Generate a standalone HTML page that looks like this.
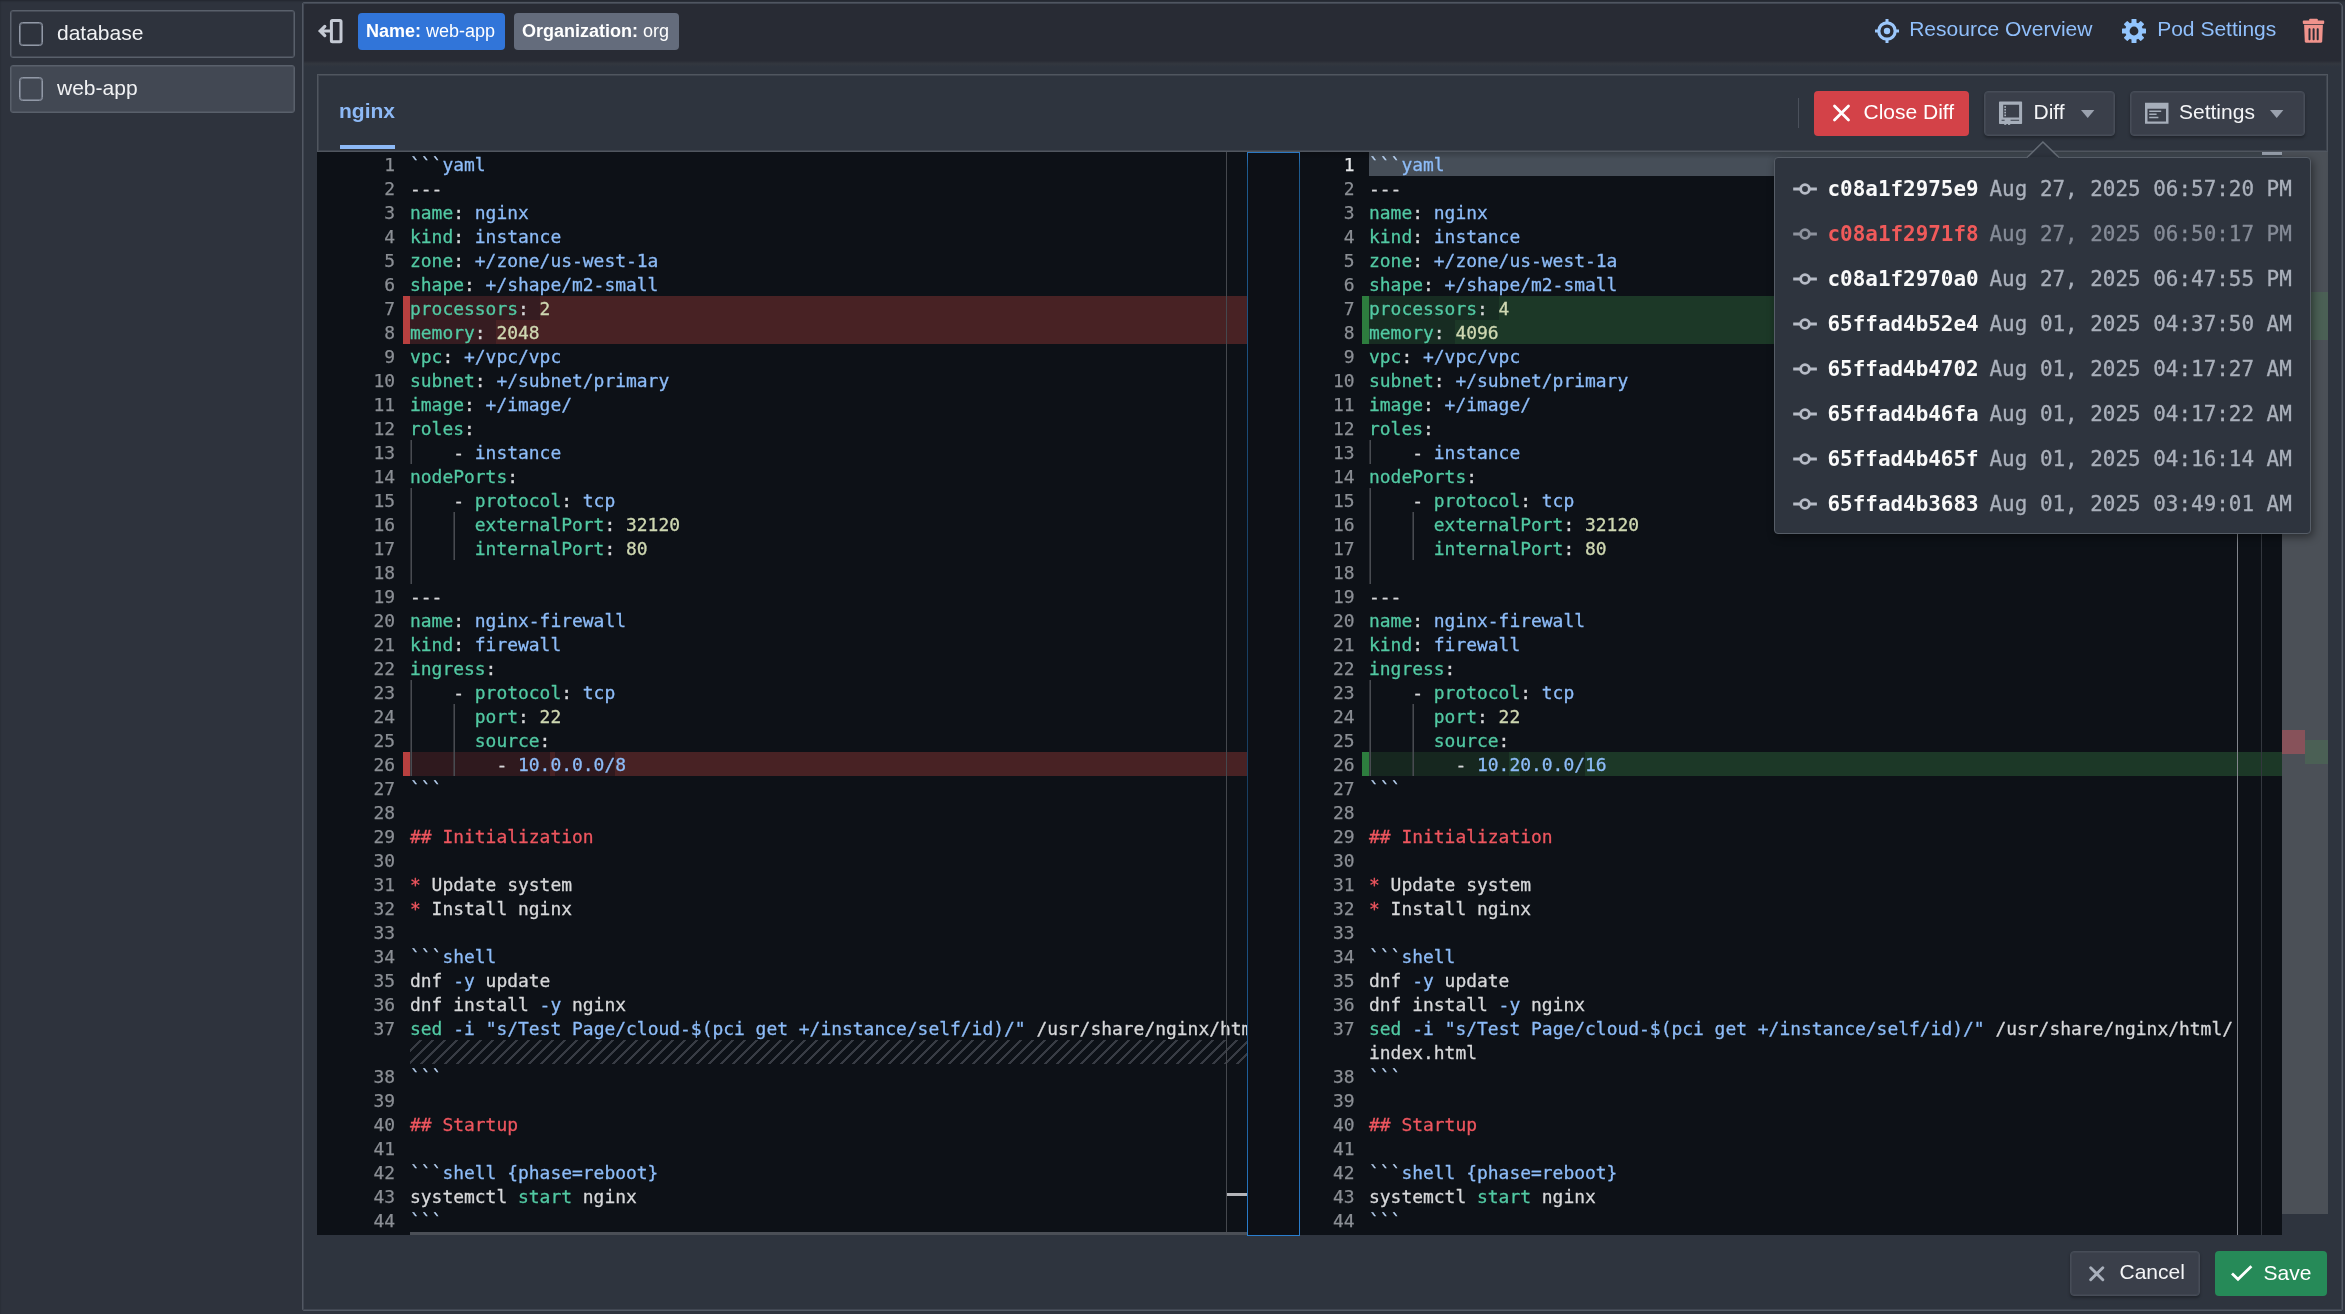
<!DOCTYPE html>
<html lang="en">
<head>
<meta charset="utf-8">
<title>Pod editor - web-app</title>
<style>
*{box-sizing:border-box}
html,body{margin:0;padding:0}
body{width:2345px;height:1314px;overflow:hidden;background:#2e333d;position:relative;
  font-family:"Liberation Sans",Arial,sans-serif;font-size:21px;color:#eef0f3}
.abs{position:absolute}
#wrap{position:absolute;left:0;top:0;width:2345px;height:1314px;will-change:transform}
/* window edge vignette */
#vig{left:0;top:0;width:2345px;height:1314px;box-shadow:inset 1px 2px 2px -1px rgba(10,12,18,.32);pointer-events:none}
/* sidebar */
.item{position:absolute;left:10px;width:285px;height:48px;border:1px solid #59606b;border-radius:3px;box-shadow:inset 0 0 0 1px rgba(89,96,107,.5)}
.item.sel{background:#424853}
.item .cb{position:absolute;left:8px;top:11px;width:24px;height:24px;border:1px solid #9299a7;box-shadow:inset 0 0 0 1px rgba(146,153,167,.55);border-radius:3.5px}
.item .lb{position:absolute;left:46px;top:1px;line-height:42px;height:42px;font-size:21px;color:#f1f2f4;white-space:nowrap}
/* main panel */
#main{left:302px;top:2px;width:2040.5px;height:1308.5px;border:1px solid #525863;box-shadow:inset 0 0 0 1px rgba(82,88,99,.5);border-radius:2px 5px 2px 2px;background:#2e343e}
#hdr{left:303.5px;top:4px;width:2037.5px;height:56.5px;background:#282b34;border-radius:2px 4px 0 0}
#hdr:after{content:"";position:absolute;left:0;top:56.5px;width:100%;height:6px;background:linear-gradient(to bottom,#292c35,#33373f 45%,#2e343e)}
.tag{position:absolute;top:9px;height:37px;border-radius:4px;font-size:18px;line-height:37px;color:#fff;white-space:nowrap;padding-left:8px}
.tag b{font-weight:bold}
.hlink{position:absolute;top:0;height:50px;line-height:49px;font-size:21px;color:#90bffb;white-space:nowrap}
/* tab panel */
#tabs{left:317px;top:74px;width:2010.5px;height:78px;border:1px solid #50565f;box-shadow:inset 0 0 0 1px rgba(80,86,95,.5);background:#2e343e}
#tabname{left:339px;top:91px;height:40px;line-height:40px;font-weight:bold;font-size:21px;color:#8db9f6;white-space:nowrap}
#tabline{left:340px;top:144.7px;width:55px;height:4.4px;background:#8db9f6}
.btn{position:absolute;top:91px;height:45px;border-radius:4px;font-size:21px;line-height:43px;white-space:nowrap;color:#f4f5f7}
.btn.sec{background:#3a3f4a;border:1px solid #474d58;box-shadow:inset 0 0 0 1px rgba(71,77,88,.5),0 2px 3px rgba(0,0,0,.3)}
.btn .bt{position:absolute;top:0}
.btn.sec .bt{line-height:40.5px}
/* editor */
#ed{left:317px;top:152px;width:1965px;height:1083px;background:#0d1117;overflow:hidden}
.pane{position:absolute;top:0;height:1083px;overflow:hidden}
.mono{font-family:"DejaVu Sans Mono","Liberation Mono",monospace;font-size:17.94px;line-height:24px}
.lns{position:absolute;top:1px;text-align:right;color:#8b8f95;-webkit-text-stroke:0.25px currentColor}
.ln{height:24px}
.ln.act{color:#e6e8ea}
.code{position:absolute;top:1px;color:#d7d8da;-webkit-text-stroke:0.3px currentColor}
.cl{height:24px;white-space:pre}
.k{color:#52c9a3}.s{color:#8dbcf8}.n{color:#cfd8b2}.h{color:#ee565f}.t{color:#b9d3f3}
.hatch{width:1000px;margin-top:-1px;margin-bottom:1px;background-image:linear-gradient(-45deg,#383c44 12.5%,transparent 12.5%,transparent 50%,#383c44 50%,#383c44 62.5%,transparent 62.5%,transparent 100%);background-size:12px 12px}
.ig{position:absolute;width:1px;background:#484b51;box-shadow:-1px 0 0 rgba(72,75,81,.55)}
.bgl{position:absolute;height:24px}
/* popup */
#pop{left:1774px;top:157px;width:536.5px;height:376.5px;background:#2e343e;border:1.5px solid #565d67;border-radius:4px;box-shadow:2px 3px 8px rgba(0,0,0,.45)}
.cm{position:absolute;left:0;width:100%;height:47px;line-height:47px;font-family:"DejaVu Sans Mono","Liberation Mono",monospace;font-size:20.93px;white-space:pre;color:#aab0bb}
.cm .ci{position:absolute;left:17.5px;top:16.700px;color:#b6bbc6}
.cm .hs{position:absolute;left:52.5px;font-weight:bold;color:#fafafa}
.cm .dt{position:absolute;left:214.5px;-webkit-text-stroke:0.3px currentColor}
.cm.cur .hs{color:#f05a5a}
.cm.cur .dt{color:#858b97}
.cm.cur .ci{color:#8d929d}
</style>
</head>
<body>
<div id="wrap">
<!-- sidebar -->
<div class="item" style="top:10px"><div class="cb"></div><div class="lb">database</div></div>
<div class="item sel" style="top:65px"><div class="cb"></div><div class="lb">web-app</div></div>

<!-- main panel -->
<div id="main" class="abs"></div>
<div id="hdr" class="abs">
  <svg class="abs" style="left:12px;top:13px" width="30" height="30" viewBox="0 0 30 30"><rect x="15.4" y="3.5" width="9.6" height="21.2" rx="1" fill="none" stroke="#c5cad4" stroke-width="3"/><path d="M14 14H4.2M8.8 9.4L4.2 14L8.8 18.6" fill="none" stroke="#c5cad4" stroke-width="3.2" stroke-linecap="round" stroke-linejoin="miter"/></svg>
  <div class="tag" style="left:54.5px;width:147px;background:#3175d9"><b>Name:</b> web-app</div>
  <div class="tag" style="left:210.5px;width:165px;background:#646c7c"><b>Organization:</b> org</div>

  <svg class="abs" style="left:1569.5px;top:13px" width="28" height="28" viewBox="0 0 28 28"><circle cx="14" cy="14" r="8.200" fill="none" stroke="#9cc7fb" stroke-width="3.200"/><circle cx="14" cy="14" r="3.2" fill="#9cc7fb"/><path d="M14 2v4M14 22v4M2 14h4M22 14h4" stroke="#9cc7fb" stroke-width="3"/></svg>
  <div class="hlink" style="left:1605.7px">Resource Overview</div>

  <svg class="abs" style="left:1816.5px;top:13px" width="28" height="28" viewBox="-14 -14 28 28"><g fill="#93c5fd"><path fill-rule="evenodd" d="M0-8.8A8.8 8.8 0 1 0 0 8.8A8.8 8.8 0 1 0 0-8.8ZM0-4.4A4.4 4.4 0 1 1 0 4.4A4.4 4.4 0 1 1 0-4.4Z"/><g id="teeth"><rect x="-2.5" y="-12" width="5" height="5" rx=".6"/><rect x="-2.5" y="7" width="5" height="5" rx=".6"/><rect x="-12" y="-2.5" width="5" height="5" rx=".6"/><rect x="7" y="-2.5" width="5" height="5" rx=".6"/></g><g transform="rotate(45)"><rect x="-2.5" y="-12" width="5" height="5" rx=".6"/><rect x="-2.5" y="7" width="5" height="5" rx=".6"/><rect x="-12" y="-2.5" width="5" height="5" rx=".6"/><rect x="7" y="-2.5" width="5" height="5" rx=".6"/></g></g></svg>
  <div class="hlink" style="left:1853.7px">Pod Settings</div>

  <svg class="abs" style="left:1997.5px;top:13px" width="26" height="28" viewBox="0 0 26 28"><g fill="#f0938c"><rect x="8.200" y="1.700" width="8.600" height="3" rx=".9"/><rect x="1.800" y="3.600" width="21.400" height="3.300" rx=".9"/><path fill-rule="evenodd" d="M3.100 7.700H21.900L21.200 24.600c0 .7-.5 1.200-1.200 1.200H5c-.7 0-1.200-.5-1.200-1.200zM7.500 12.300v9.900c0 1.300 2 1.300 2 0V12.300c0-1.300-2-1.300-2 0zM11.600 12.300v9.900c0 1.300 2 1.300 2 0V12.300c0-1.300-2-1.300-2 0zM15.700 12.300v9.900c0 1.300 2 1.300 2 0V12.300c0-1.300-2-1.300-2 0z"/></g></svg>
</div>

<!-- tab panel + toolbar -->
<div id="tabs" class="abs"></div>
<div id="tabname" class="abs">nginx</div>
<div id="tabline" class="abs"></div>
<div class="abs" style="left:1797.5px;top:98px;width:1.5px;height:30px;background:#4b515c"></div>

<div class="btn" style="left:1814px;width:155px;background:#d34248;color:#fff">
  <svg class="abs" style="left:18px;top:12.5px" width="19" height="18" viewBox="0 0 19 18"><path d="M2.5 2L16.500 16M16.500 2L2.5 16" stroke="#fff" stroke-width="2.800" stroke-linecap="round"/></svg>
  <span class="bt" style="left:49.5px;line-height:42px">Close Diff</span>
</div>
<div class="btn sec" style="left:1984px;width:131px">
  <svg class="abs" style="left:13px;top:9px" width="26" height="25" viewBox="0 0 26 25"><g fill="#a6aeba"><path fill-rule="evenodd" d="M2 .5h21.100c.6 0 1 .4 1 1V22c0 .6-.4 1-1 1H2c-.6 0-1-.4-1-1V1.500c0-.6.400-1 1-1zM5.200 3.800v12.800H21.100V3.800zM3.600 18.700v1.100h3v-1.100zM12.600 18.700v1.100h8.500v-1.100z"/><rect x="6.300" y="5.100" width="1.700" height="1.700"/><rect x="6.300" y="7.900" width="1.700" height="1.700"/><rect x="6.300" y="10.700" width="1.700" height="1.700"/><rect x="6.300" y="13.500" width="1.700" height="1.700"/><rect x="6.200" y="22.800" width="2.100" height="1.100"/><rect x="10" y="22.800" width="2.200" height="1.100"/></g></svg>
  <span class="bt" style="left:48.5px">Diff</span>
  <svg class="abs" style="left:95.5px;top:18px" width="14" height="9" viewBox="0 0 14 9"><path d="M0 0h13.400L6.700 8z" fill="#9aa1ae"/></svg>
</div>
<div class="btn sec" style="left:2130px;width:175px">
  <svg class="abs" style="left:13px;top:10px" width="26" height="23" viewBox="0 0 26 23"><path fill-rule="evenodd" fill="#a6aeba" d="M1 .8h23.500V21.800H1zM3.500 6.700v12.700H22V6.700zM5.200 8.400h12v1.500H5.200zM5.200 11.600h7.400v1.500H5.200zM5.200 14.800h9.200v1.500H5.200z"/></svg>
  <span class="bt" style="left:48px">Settings</span>
  <svg class="abs" style="left:139px;top:18px" width="14" height="9" viewBox="0 0 14 9"><path d="M0 0h13.400L6.700 8z" fill="#9aa1ae"/></svg>
</div>

<!-- diff editor -->
<div id="ed" class="abs">
  <!-- left (original) pane: x 317..1247 -->
  <div class="pane" style="left:0;width:930.5px">
    <div class="bgl" style="left:86px;top:144px;width:7px;height:48px;background:#b8403f"></div>
    <div class="bgl" style="left:93px;top:144px;width:900px;height:48px;background:#482224"></div>
    <div class="bgl" style="left:93px;top:144px;width:129.6px;background:#361c21"></div>
    <div class="bgl" style="left:93px;top:168px;width:86.4px;background:#361c21"></div>
    <div class="bgl" style="left:86px;top:600px;width:7px;background:#b8403f"></div>
    <div class="bgl" style="left:93px;top:600px;width:900px;background:#482224"></div>
    <div class="bgl" style="left:93px;top:600px;width:140.4px;background:#2f191e"></div>
    <div class="bgl" style="left:237.5px;top:600px;width:60.700px;background:#2f191e"></div>
    <div class="lns mono" style="left:0;width:78px">
<div class="ln">1</div>
<div class="ln">2</div>
<div class="ln">3</div>
<div class="ln">4</div>
<div class="ln">5</div>
<div class="ln">6</div>
<div class="ln">7</div>
<div class="ln">8</div>
<div class="ln">9</div>
<div class="ln">10</div>
<div class="ln">11</div>
<div class="ln">12</div>
<div class="ln">13</div>
<div class="ln">14</div>
<div class="ln">15</div>
<div class="ln">16</div>
<div class="ln">17</div>
<div class="ln">18</div>
<div class="ln">19</div>
<div class="ln">20</div>
<div class="ln">21</div>
<div class="ln">22</div>
<div class="ln">23</div>
<div class="ln">24</div>
<div class="ln">25</div>
<div class="ln">26</div>
<div class="ln">27</div>
<div class="ln">28</div>
<div class="ln">29</div>
<div class="ln">30</div>
<div class="ln">31</div>
<div class="ln">32</div>
<div class="ln">33</div>
<div class="ln">34</div>
<div class="ln">35</div>
<div class="ln">36</div>
<div class="ln">37</div>
<div class="ln"></div>
<div class="ln">38</div>
<div class="ln">39</div>
<div class="ln">40</div>
<div class="ln">41</div>
<div class="ln">42</div>
<div class="ln">43</div>
<div class="ln">44</div>
    </div>
    <div class="code mono" style="left:93px">
<div class="ig" style="left:1px;top:287px;height:24px"></div><div class="ig" style="left:1px;top:335px;height:96px"></div><div class="ig" style="left:1px;top:527px;height:96px"></div><div class="ig" style="left:44px;top:359px;height:48px"></div><div class="ig" style="left:44px;top:551px;height:72px"></div>
<div class="cl"><span class="t">```</span><span class="s">yaml</span></div>
<div class="cl">---</div>
<div class="cl"><span class="k">name</span>: <span class="s">nginx</span></div>
<div class="cl"><span class="k">kind</span>: <span class="s">instance</span></div>
<div class="cl"><span class="k">zone</span>: <span class="s">+/zone/us-west-1a</span></div>
<div class="cl"><span class="k">shape</span>: <span class="s">+/shape/m2-small</span></div>
<div class="cl"><span class="k">processors</span>: <span class="n">2</span></div>
<div class="cl"><span class="k">memory</span>: <span class="n">2048</span></div>
<div class="cl"><span class="k">vpc</span>: <span class="s">+/vpc/vpc</span></div>
<div class="cl"><span class="k">subnet</span>: <span class="s">+/subnet/primary</span></div>
<div class="cl"><span class="k">image</span>: <span class="s">+/image/</span></div>
<div class="cl"><span class="k">roles</span>:</div>
<div class="cl">    - <span class="s">instance</span></div>
<div class="cl"><span class="k">nodePorts</span>:</div>
<div class="cl">    - <span class="k">protocol</span>: <span class="s">tcp</span></div>
<div class="cl">      <span class="k">externalPort</span>: <span class="n">32120</span></div>
<div class="cl">      <span class="k">internalPort</span>: <span class="n">80</span></div>
<div class="cl"></div>
<div class="cl">---</div>
<div class="cl"><span class="k">name</span>: <span class="s">nginx-firewall</span></div>
<div class="cl"><span class="k">kind</span>: <span class="s">firewall</span></div>
<div class="cl"><span class="k">ingress</span>:</div>
<div class="cl">    - <span class="k">protocol</span>: <span class="s">tcp</span></div>
<div class="cl">      <span class="k">port</span>: <span class="n">22</span></div>
<div class="cl">      <span class="k">source</span>:</div>
<div class="cl">        - <span class="s">10.0.0.0/8</span></div>
<div class="cl"><span class="t">```</span></div>
<div class="cl"></div>
<div class="cl"><span class="h">## Initialization</span></div>
<div class="cl"></div>
<div class="cl"><span class="h">*</span> Update system</div>
<div class="cl"><span class="h">*</span> Install nginx</div>
<div class="cl"></div>
<div class="cl"><span class="t">```</span><span class="s">shell</span></div>
<div class="cl">dnf <span class="s">-y</span> update</div>
<div class="cl">dnf install <span class="s">-y</span> nginx</div>
<div class="cl"><span class="k">sed</span> <span class="s">-i</span> <span class="s">"s/Test Page/cloud-$(pci get +/instance/self/id)/"</span> /usr/share/nginx/html/index.html</div>
<div class="cl hatch"></div>
<div class="cl"><span class="t">```</span></div>
<div class="cl"></div>
<div class="cl"><span class="h">## Startup</span></div>
<div class="cl"></div>
<div class="cl"><span class="t">```</span><span class="s">shell {phase=reboot}</span></div>
<div class="cl">systemctl <span class="k">start</span> nginx</div>
<div class="cl"><span class="t">```</span></div>
    </div>
    <div class="abs" style="left:909px;top:0;width:1px;height:1083px;background:#45484e"></div>
    <div class="abs" style="left:910px;top:1041px;width:20.500px;height:3px;background:#b4b5ba"></div>
    <div class="abs" style="left:93px;top:1080px;width:838px;height:3px;background:#4b4f56"></div>
  </div>
  <!-- right (modified) pane: x 1300..2282 -->
  <div class="pane" style="left:983px;width:982px">
    <div class="bgl" style="left:69px;top:0;width:913px;height:24px;background:#464e58"></div>
    <div class="abs" style="left:0;top:0;width:982px;height:7px;background:linear-gradient(rgba(0,0,0,.2),rgba(0,0,0,0))"></div>
    <div class="bgl" style="left:62px;top:144px;width:7px;height:48px;background:#2d7d3e"></div>
    <div class="bgl" style="left:69px;top:144px;width:913px;height:48px;background:#1c3827"></div>
    <div class="bgl" style="left:69px;top:144px;width:129.6px;background:#172c22"></div>
    <div class="bgl" style="left:69px;top:168px;width:86.4px;background:#172c22"></div>
    <div class="bgl" style="left:62px;top:600px;width:7px;background:#2d7d3e"></div>
    <div class="bgl" style="left:69px;top:600px;width:913px;background:#1c3827"></div>
    <div class="bgl" style="left:69px;top:600px;width:140.4px;background:#16271f"></div>
    <div class="bgl" style="left:220.2px;top:600px;width:64.800px;background:#16271f"></div>
    <div class="lns mono" style="left:0;width:54.5px">
<div class="ln act">1</div>
<div class="ln">2</div>
<div class="ln">3</div>
<div class="ln">4</div>
<div class="ln">5</div>
<div class="ln">6</div>
<div class="ln">7</div>
<div class="ln">8</div>
<div class="ln">9</div>
<div class="ln">10</div>
<div class="ln">11</div>
<div class="ln">12</div>
<div class="ln">13</div>
<div class="ln">14</div>
<div class="ln">15</div>
<div class="ln">16</div>
<div class="ln">17</div>
<div class="ln">18</div>
<div class="ln">19</div>
<div class="ln">20</div>
<div class="ln">21</div>
<div class="ln">22</div>
<div class="ln">23</div>
<div class="ln">24</div>
<div class="ln">25</div>
<div class="ln">26</div>
<div class="ln">27</div>
<div class="ln">28</div>
<div class="ln">29</div>
<div class="ln">30</div>
<div class="ln">31</div>
<div class="ln">32</div>
<div class="ln">33</div>
<div class="ln">34</div>
<div class="ln">35</div>
<div class="ln">36</div>
<div class="ln">37</div>
<div class="ln"></div>
<div class="ln">38</div>
<div class="ln">39</div>
<div class="ln">40</div>
<div class="ln">41</div>
<div class="ln">42</div>
<div class="ln">43</div>
<div class="ln">44</div>
    </div>
    <div class="code mono" style="left:69px">
<div class="ig" style="left:1px;top:287px;height:24px"></div><div class="ig" style="left:1px;top:335px;height:96px"></div><div class="ig" style="left:1px;top:527px;height:96px"></div><div class="ig" style="left:44px;top:359px;height:48px"></div><div class="ig" style="left:44px;top:551px;height:72px"></div>
<div class="cl"><span class="t">```</span><span class="s">yaml</span></div>
<div class="cl">---</div>
<div class="cl"><span class="k">name</span>: <span class="s">nginx</span></div>
<div class="cl"><span class="k">kind</span>: <span class="s">instance</span></div>
<div class="cl"><span class="k">zone</span>: <span class="s">+/zone/us-west-1a</span></div>
<div class="cl"><span class="k">shape</span>: <span class="s">+/shape/m2-small</span></div>
<div class="cl"><span class="k">processors</span>: <span class="n">4</span></div>
<div class="cl"><span class="k">memory</span>: <span class="n">4096</span></div>
<div class="cl"><span class="k">vpc</span>: <span class="s">+/vpc/vpc</span></div>
<div class="cl"><span class="k">subnet</span>: <span class="s">+/subnet/primary</span></div>
<div class="cl"><span class="k">image</span>: <span class="s">+/image/</span></div>
<div class="cl"><span class="k">roles</span>:</div>
<div class="cl">    - <span class="s">instance</span></div>
<div class="cl"><span class="k">nodePorts</span>:</div>
<div class="cl">    - <span class="k">protocol</span>: <span class="s">tcp</span></div>
<div class="cl">      <span class="k">externalPort</span>: <span class="n">32120</span></div>
<div class="cl">      <span class="k">internalPort</span>: <span class="n">80</span></div>
<div class="cl"></div>
<div class="cl">---</div>
<div class="cl"><span class="k">name</span>: <span class="s">nginx-firewall</span></div>
<div class="cl"><span class="k">kind</span>: <span class="s">firewall</span></div>
<div class="cl"><span class="k">ingress</span>:</div>
<div class="cl">    - <span class="k">protocol</span>: <span class="s">tcp</span></div>
<div class="cl">      <span class="k">port</span>: <span class="n">22</span></div>
<div class="cl">      <span class="k">source</span>:</div>
<div class="cl">        - <span class="s">10.20.0.0/16</span></div>
<div class="cl"><span class="t">```</span></div>
<div class="cl"></div>
<div class="cl"><span class="h">## Initialization</span></div>
<div class="cl"></div>
<div class="cl"><span class="h">*</span> Update system</div>
<div class="cl"><span class="h">*</span> Install nginx</div>
<div class="cl"></div>
<div class="cl"><span class="t">```</span><span class="s">shell</span></div>
<div class="cl">dnf <span class="s">-y</span> update</div>
<div class="cl">dnf install <span class="s">-y</span> nginx</div>
<div class="cl"><span class="k">sed</span> <span class="s">-i</span> <span class="s">"s/Test Page/cloud-$(pci get +/instance/self/id)/"</span> /usr/share/nginx/html/</div>
<div class="cl">index.html</div>
<div class="cl"><span class="t">```</span></div>
<div class="cl"></div>
<div class="cl"><span class="h">## Startup</span></div>
<div class="cl"></div>
<div class="cl"><span class="t">```</span><span class="s">shell {phase=reboot}</span></div>
<div class="cl">systemctl <span class="k">start</span> nginx</div>
<div class="cl"><span class="t">```</span></div>
    </div>
    <div class="abs" style="left:936.5px;top:8px;width:1.5px;height:1075px;background:#82868d"></div>
    <div class="abs" style="left:961px;top:8px;width:1px;height:1075px;background:#33373e"></div>
    <div class="abs" style="left:961.5px;top:0;width:20.500px;height:3px;background:#969eaa"></div>
  </div>
</div>
<!-- gutter between panes with focus outline -->
<div class="abs" style="left:1247px;top:152px;width:53px;height:1084px;border:1px solid #1a4d7d;border-image:linear-gradient(to bottom,#2a78c4,#1d5a8e 1.500%,#1b4f7e 20%,#183f63 42%,#183f63 62%,#1f64a4 90%,#2a7fd0) 1;background:#0d1016"></div>
<!-- overview ruler -->
<div class="abs" style="left:2282px;top:152px;width:45.500px;height:1062px;background:#4b5057">
  <div class="abs" style="left:0;top:134px;width:23px;height:48px;background:#87525a"></div>
  <div class="abs" style="left:23px;top:140px;width:22.500px;height:48px;background:#4b6055"></div>
  <div class="abs" style="left:0;top:578px;width:23px;height:24px;background:#87525a"></div>
  <div class="abs" style="left:23px;top:588px;width:22.500px;height:24px;background:#4b6055"></div>
</div>

<!-- bottom buttons -->
<div class="btn sec" style="left:2070px;top:1251px;width:130px">
  <svg class="abs" style="left:17px;top:13px" width="18" height="18" viewBox="0 0 18 18"><path d="M2.700 2.700L14.800 14.800M14.800 2.700L2.700 14.800" stroke="#a9b0bc" stroke-width="2.900" stroke-linecap="round"/></svg>
  <span class="bt" style="left:48.5px">Cancel</span>
</div>
<div class="btn" style="left:2215px;top:1251px;width:112px;background:#268a58;color:#fff">
  <svg class="abs" style="left:15px;top:13px" width="24" height="18" viewBox="0 0 24 18"><path d="M2 9.500L8 15.300L21.400 2.200" fill="none" stroke="#fff" stroke-width="2.800" stroke-linecap="butt"/></svg>
  <span class="bt" style="left:48.5px;line-height:43.5px">Save</span>
</div>

<!-- history popup -->
<svg class="abs" style="left:2025px;top:141px" width="36" height="19" viewBox="0 0 36 19"><path d="M1.300 17.300L17.900 1L34.800 17.300z" fill="#2e343e"/><path d="M1 17.600L17.900 1L35.100 17.600" fill="none" stroke="#656c76" stroke-width="1.500"/></svg>
<div id="pop" class="abs">
<div class="cm " style="top:8.0px"><svg class="ci" viewBox="0 0 24 12" width="24" height="12"><path d="M0.2 6H7.800M16.200 6H23.900" stroke="currentColor" stroke-width="2.800" fill="none"/><circle cx="12" cy="6" r="4.350" stroke="currentColor" stroke-width="2.800" fill="none"/></svg><span class="hs">c08a1f2975e9</span> <span class="dt">Aug 27, 2025 06:57:20 PM</span></div>
<div class="cm cur" style="top:53.0px"><svg class="ci" viewBox="0 0 24 12" width="24" height="12"><path d="M0.2 6H7.800M16.200 6H23.900" stroke="currentColor" stroke-width="2.800" fill="none"/><circle cx="12" cy="6" r="4.350" stroke="currentColor" stroke-width="2.800" fill="none"/></svg><span class="hs">c08a1f2971f8</span> <span class="dt">Aug 27, 2025 06:50:17 PM</span></div>
<div class="cm " style="top:98.0px"><svg class="ci" viewBox="0 0 24 12" width="24" height="12"><path d="M0.2 6H7.800M16.200 6H23.900" stroke="currentColor" stroke-width="2.800" fill="none"/><circle cx="12" cy="6" r="4.350" stroke="currentColor" stroke-width="2.800" fill="none"/></svg><span class="hs">c08a1f2970a0</span> <span class="dt">Aug 27, 2025 06:47:55 PM</span></div>
<div class="cm " style="top:143.0px"><svg class="ci" viewBox="0 0 24 12" width="24" height="12"><path d="M0.2 6H7.800M16.200 6H23.900" stroke="currentColor" stroke-width="2.800" fill="none"/><circle cx="12" cy="6" r="4.350" stroke="currentColor" stroke-width="2.800" fill="none"/></svg><span class="hs">65ffad4b52e4</span> <span class="dt">Aug 01, 2025 04:37:50 AM</span></div>
<div class="cm " style="top:188.0px"><svg class="ci" viewBox="0 0 24 12" width="24" height="12"><path d="M0.2 6H7.800M16.200 6H23.900" stroke="currentColor" stroke-width="2.800" fill="none"/><circle cx="12" cy="6" r="4.350" stroke="currentColor" stroke-width="2.800" fill="none"/></svg><span class="hs">65ffad4b4702</span> <span class="dt">Aug 01, 2025 04:17:27 AM</span></div>
<div class="cm " style="top:233.0px"><svg class="ci" viewBox="0 0 24 12" width="24" height="12"><path d="M0.2 6H7.800M16.200 6H23.900" stroke="currentColor" stroke-width="2.800" fill="none"/><circle cx="12" cy="6" r="4.350" stroke="currentColor" stroke-width="2.800" fill="none"/></svg><span class="hs">65ffad4b46fa</span> <span class="dt">Aug 01, 2025 04:17:22 AM</span></div>
<div class="cm " style="top:278.0px"><svg class="ci" viewBox="0 0 24 12" width="24" height="12"><path d="M0.2 6H7.800M16.200 6H23.900" stroke="currentColor" stroke-width="2.800" fill="none"/><circle cx="12" cy="6" r="4.350" stroke="currentColor" stroke-width="2.800" fill="none"/></svg><span class="hs">65ffad4b465f</span> <span class="dt">Aug 01, 2025 04:16:14 AM</span></div>
<div class="cm " style="top:323.0px"><svg class="ci" viewBox="0 0 24 12" width="24" height="12"><path d="M0.2 6H7.800M16.200 6H23.900" stroke="currentColor" stroke-width="2.800" fill="none"/><circle cx="12" cy="6" r="4.350" stroke="currentColor" stroke-width="2.800" fill="none"/></svg><span class="hs">65ffad4b3683</span> <span class="dt">Aug 01, 2025 03:49:01 AM</span></div>

</div>
<svg class="abs" style="left:2028px;top:157px" width="30" height="3" viewBox="0 0 30 3"><rect width="30" height="3" fill="#2e343e"/></svg>
<div id="vig" class="abs"></div>
</div>
</body>
</html>
